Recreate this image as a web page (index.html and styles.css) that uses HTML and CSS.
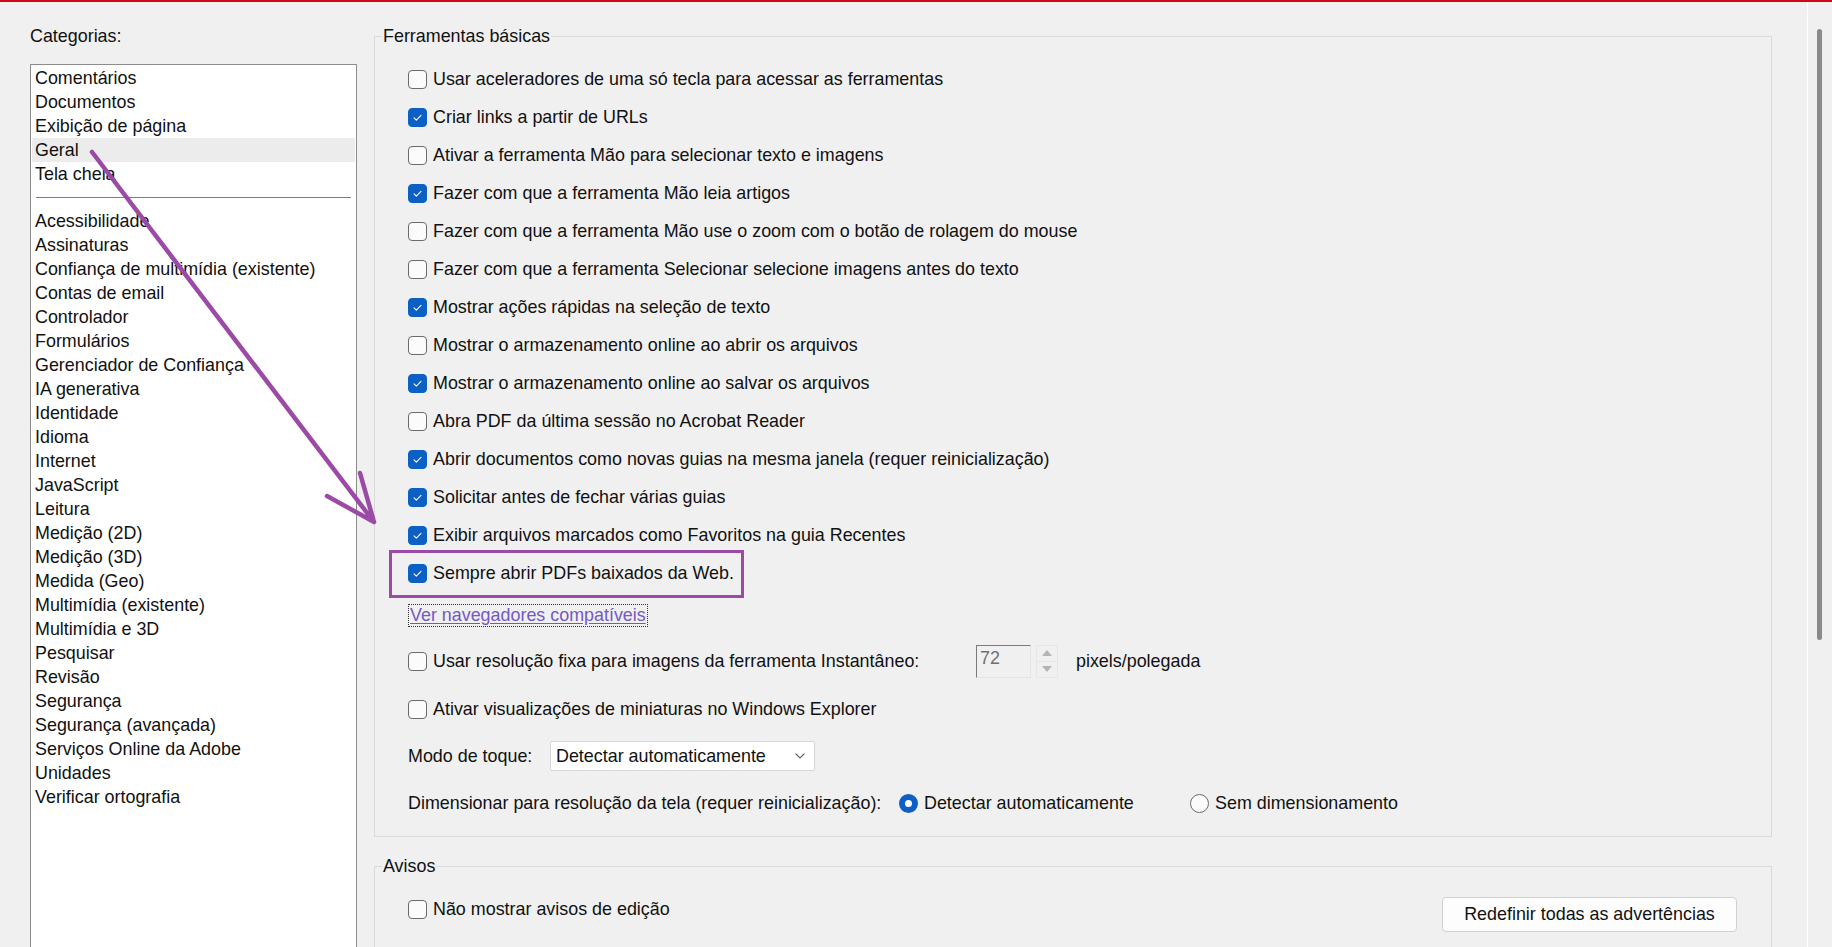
FILE: index.html
```html
<!DOCTYPE html>
<html lang="pt-BR">
<head>
<meta charset="utf-8">
<title>Preferências</title>
<link rel="stylesheet" href="styles.css">
</head>
<body>
<div class="topbar"></div>
<div class="main">
  <div class="left">
    <div class="cat-label">Categorias:</div>
    <div class="listbox">
      <div class="item">Comentários</div>
      <div class="item">Documentos</div>
      <div class="item">Exibição de página</div>
      <div class="item selected">Geral</div>
      <div class="item">Tela cheia</div>
      <div class="sep"></div>
      <div class="item">Acessibilidade</div>
      <div class="item">Assinaturas</div>
      <div class="item">Confiança de multimídia (existente)</div>
      <div class="item">Contas de email</div>
      <div class="item">Controlador</div>
      <div class="item">Formulários</div>
      <div class="item">Gerenciador de Confiança</div>
      <div class="item">IA generativa</div>
      <div class="item">Identidade</div>
      <div class="item">Idioma</div>
      <div class="item">Internet</div>
      <div class="item">JavaScript</div>
      <div class="item">Leitura</div>
      <div class="item">Medição (2D)</div>
      <div class="item">Medição (3D)</div>
      <div class="item">Medida (Geo)</div>
      <div class="item">Multimídia (existente)</div>
      <div class="item">Multimídia e 3D</div>
      <div class="item">Pesquisar</div>
      <div class="item">Revisão</div>
      <div class="item">Segurança</div>
      <div class="item">Segurança (avançada)</div>
      <div class="item">Serviços Online da Adobe</div>
      <div class="item">Unidades</div>
      <div class="item">Verificar ortografia</div>
    </div>
  </div>

  <div class="right">
    <fieldset class="group basic">
      <legend>Ferramentas básicas</legend>
      <div class="content">
        <div class="row"><span class="cb"></span><span>Usar aceleradores de uma só tecla para acessar as ferramentas</span></div>
        <div class="row"><span class="cb on"><svg viewBox="0 0 19 19"><path d="M5.6 9.9 L8.2 12.4 L13.4 7.1"/></svg></span><span>Criar links a partir de URLs</span></div>
        <div class="row"><span class="cb"></span><span>Ativar a ferramenta Mão para selecionar texto e imagens</span></div>
        <div class="row"><span class="cb on"><svg viewBox="0 0 19 19"><path d="M5.6 9.9 L8.2 12.4 L13.4 7.1"/></svg></span><span>Fazer com que a ferramenta Mão leia artigos</span></div>
        <div class="row"><span class="cb"></span><span>Fazer com que a ferramenta Mão use o zoom com o botão de rolagem do mouse</span></div>
        <div class="row"><span class="cb"></span><span>Fazer com que a ferramenta Selecionar selecione imagens antes do texto</span></div>
        <div class="row"><span class="cb on"><svg viewBox="0 0 19 19"><path d="M5.6 9.9 L8.2 12.4 L13.4 7.1"/></svg></span><span>Mostrar ações rápidas na seleção de texto</span></div>
        <div class="row"><span class="cb"></span><span>Mostrar o armazenamento online ao abrir os arquivos</span></div>
        <div class="row"><span class="cb on"><svg viewBox="0 0 19 19"><path d="M5.6 9.9 L8.2 12.4 L13.4 7.1"/></svg></span><span>Mostrar o armazenamento online ao salvar os arquivos</span></div>
        <div class="row"><span class="cb"></span><span>Abra PDF da última sessão no Acrobat Reader</span></div>
        <div class="row"><span class="cb on"><svg viewBox="0 0 19 19"><path d="M5.6 9.9 L8.2 12.4 L13.4 7.1"/></svg></span><span>Abrir documentos como novas guias na mesma janela (requer reinicialização)</span></div>
        <div class="row"><span class="cb on"><svg viewBox="0 0 19 19"><path d="M5.6 9.9 L8.2 12.4 L13.4 7.1"/></svg></span><span>Solicitar antes de fechar várias guias</span></div>
        <div class="row"><span class="cb on"><svg viewBox="0 0 19 19"><path d="M5.6 9.9 L8.2 12.4 L13.4 7.1"/></svg></span><span>Exibir arquivos marcados como Favoritos na guia Recentes</span></div>
        <div class="row"><span class="cb on"><svg viewBox="0 0 19 19"><path d="M5.6 9.9 L8.2 12.4 L13.4 7.1"/></svg></span><span>Sempre abrir PDFs baixados da Web.</span></div>

        <div class="link-row"><a class="link" href="#">Ver navegadores compatíveis</a></div>

        <div class="row res-row">
          <div class="res-label"><span class="cb"></span><span>Usar resolução fixa para imagens da ferramenta Instantâneo:</span></div>
          <div class="spin-input">72</div>
          <div class="spin-btns">
            <span class="tri up"></span>
            <span class="tri down"></span>
          </div>
          <span class="unit">pixels/polegada</span>
        </div>

        <div class="row row-thumb"><span class="cb"></span><span>Ativar visualizações de miniaturas no Windows Explorer</span></div>

        <div class="row row-touch">
          <span class="touch-label">Modo de toque:</span>
          <div class="select">
            <span>Detectar automaticamente</span>
            <svg class="chev" viewBox="0 0 12 8"><path d="M1.5 1.5 L6 6 L10.5 1.5"/></svg>
          </div>
        </div>

        <div class="row row-scale">
          <span class="scale-label">Dimensionar para resolução da tela (requer reinicialização):</span>
          <div class="opt first"><span class="radio on"></span><span>Detectar automaticamente</span></div>
          <div class="opt"><span class="radio"></span><span>Sem dimensionamento</span></div>
        </div>
      </div>
    </fieldset>

    <fieldset class="group warn">
      <legend>Avisos</legend>
      <div class="content warn-content">
        <div class="row"><span class="cb"></span><span>Não mostrar avisos de edição</span></div>
        <button class="btn">Redefinir todas as advertências</button>
      </div>
    </fieldset>
  </div>

  <div class="scroll">
    <div class="thumb"></div>
  </div>
</div>

<div class="highlight-box"></div>
<svg class="arrow" width="1832" height="947" viewBox="0 0 1832 947">
  <path d="M92 152 L374 522 M327 496 L374 522 L360 473"/>
</svg>
</body>
</html>
```

FILE: styles.css
```css
html, body {
  margin: 0;
  padding: 0;
}

body {
  width: 1832px;
  height: 947px;
  overflow: hidden;
  background: #f0f0f0;
  font-family: "Liberation Sans", Arial, sans-serif;
  font-size: 17.9px;
  color: #111;
  position: relative;
}

.topbar {
  height: 2px;
  background: #d2061a;
}

.main {
  display: flex;
  align-items: flex-start;
}

/* ---------- left column ---------- */
.left {
  padding-left: 30px;
  padding-top: 22px;
  width: 327px;
  flex: none;
}

.cat-label {
  line-height: 24px;
  height: 24px;
  margin-bottom: 16px;
}

.listbox {
  box-sizing: border-box;
  width: 327px;
  height: 900px;
  background: #fff;
  border: 1px solid #8c8c8c;
  padding-top: 1px;
}

.item {
  height: 24px;
  line-height: 24px;
  padding-left: 3px;
  margin: 0 1px;
  white-space: nowrap;
}

.item.selected {
  background: #ececec;
}

.sep {
  height: 1px;
  background: #3c8ad0;
  margin: 11px 5px 11px 5px;
}

/* ---------- right column ---------- */
.right {
  width: 1398px;
  flex: none;
  margin-left: 17px;
  padding-top: 22px;
}

.group {
  margin: 0;
  padding: 0;
  min-width: 0;
  border: 1px solid #dadada;
}

.group legend {
  margin-left: 7px;
  padding: 0 1px;
  line-height: 24px;
  font-size: 17.9px;
}

.content {
  padding: 12px 0 14px 33px;
}

.row {
  display: flex;
  align-items: center;
  height: 38px;
  white-space: nowrap;
}

.cb {
  box-sizing: border-box;
  width: 19px;
  height: 19px;
  border: 1px solid #6b6b6b;
  border-radius: 4px;
  background: #fbfbfb;
  margin-right: 6px;
  flex: none;
  display: block;
}

.cb.on {
  background: #0c5fc4;
  border-color: #0c5fc4;
}

.cb svg {
  display: block;
  width: 17px;
  height: 17px;
}

.cb svg path {
  fill: none;
  stroke: #fff;
  stroke-width: 1.2;
  stroke-linecap: round;
  stroke-linejoin: round;
}

.link-row {
  margin-top: 12px;
  height: 23px;
  display: flex;
}

.link {
  box-sizing: border-box;
  height: 23px;
  line-height: 21px;
  border: 1px dotted #333;
  padding: 0 1px 0 1px;
  color: #7459c6;
  text-decoration: underline;
  text-underline-offset: 2px;
}

.res-row {
  margin-top: 15px;
}

.res-label {
  display: flex;
  align-items: center;
  width: 568px;
  flex: none;
}

.spin-input {
  box-sizing: border-box;
  width: 55px;
  height: 33px;
  border-top: 1px solid #7a7a7a;
  border-left: 1px solid #7a7a7a;
  border-right: 1px solid #e4e4e4;
  border-bottom: 1px solid #e4e4e4;
  background: #f0f0f0;
  color: #707070;
  padding: 1px 0 0 3px;
  line-height: 22px;
  align-self: center;
}

.spin-btns {
  box-sizing: border-box;
  width: 22px;
  height: 33px;
  margin-left: 5px;
  border: 1px solid #e6e6e6;
  display: flex;
  flex-direction: column;
}

.tri {
  flex: 1;
  display: flex;
  align-items: center;
  justify-content: center;
}

.tri.up {
  border-bottom: 1px solid #e6e6e6;
}

.tri::before {
  content: "";
  width: 0;
  height: 0;
  border-left: 5px solid transparent;
  border-right: 5px solid transparent;
}

.tri.up::before {
  border-bottom: 6px solid #b4b4b4;
}

.tri.down::before {
  border-top: 6px solid #b4b4b4;
}

.unit {
  margin-left: 18px;
}

.row-thumb {
  margin-top: 10px;
}

.row-touch {
  margin-top: 9px;
}

.touch-label {
  width: 142px;
  flex: none;
}

.select {
  box-sizing: border-box;
  width: 265px;
  height: 30px;
  background: #fff;
  border: 1px solid #d6d6d6;
  border-radius: 2px;
  display: flex;
  align-items: center;
  justify-content: space-between;
  padding: 0 8px 0 5px;
}

.chev {
  width: 12px;
  height: 8px;
}

.chev path {
  fill: none;
  stroke: #666;
  stroke-width: 1.1;
}

.row-scale {
  margin-top: 9px;
}

.scale-label {
  width: 491px;
  flex: none;
}

.opt {
  display: flex;
  align-items: center;
}

.opt.first {
  width: 291px;
  flex: none;
}

.radio {
  box-sizing: border-box;
  width: 19px;
  height: 19px;
  border-radius: 50%;
  border: 1px solid #6b6b6b;
  background: #fbfbfb;
  margin-right: 6px;
  flex: none;
}

.radio.on {
  border: 6px solid #0c5fc4;
  background: #fff;
}

/* ---------- warnings group ---------- */
.warn {
  margin-top: 17px;
  height: 120px;
}

.warn-content {
  display: flex;
  align-items: flex-start;
  justify-content: space-between;
  padding: 12px 34px 0 33px;
}

.btn {
  box-sizing: border-box;
  margin-top: 7px;
  width: 295px;
  height: 35px;
  background: #fdfdfd;
  border: 1px solid #d0d0d0;
  border-radius: 4px;
  font-family: inherit;
  font-size: 17.9px;
  color: #111;
  padding: 0;
}

/* ---------- scrollbar ---------- */
.scroll {
  margin-left: 35px;
  width: 24px;
  height: 945px;
  border-left: 1px solid #ffffff;
  flex: none;
}

.thumb {
  margin-top: 27px;
  margin-left: 9px;
  width: 5px;
  height: 611px;
  border-radius: 3px;
  background: #8a8a8a;
}

/* ---------- annotations ---------- */
.highlight-box {
  position: absolute;
  left: 389px;
  top: 550px;
  width: 349px;
  height: 42px;
  border: 3px solid #9b4aa6;
}

.arrow {
  position: absolute;
  left: 0;
  top: 0;
  pointer-events: none;
}

.arrow path {
  fill: none;
  stroke: #9b4aa6;
  stroke-width: 4.5;
  stroke-linecap: round;
  stroke-linejoin: round;
}
```
